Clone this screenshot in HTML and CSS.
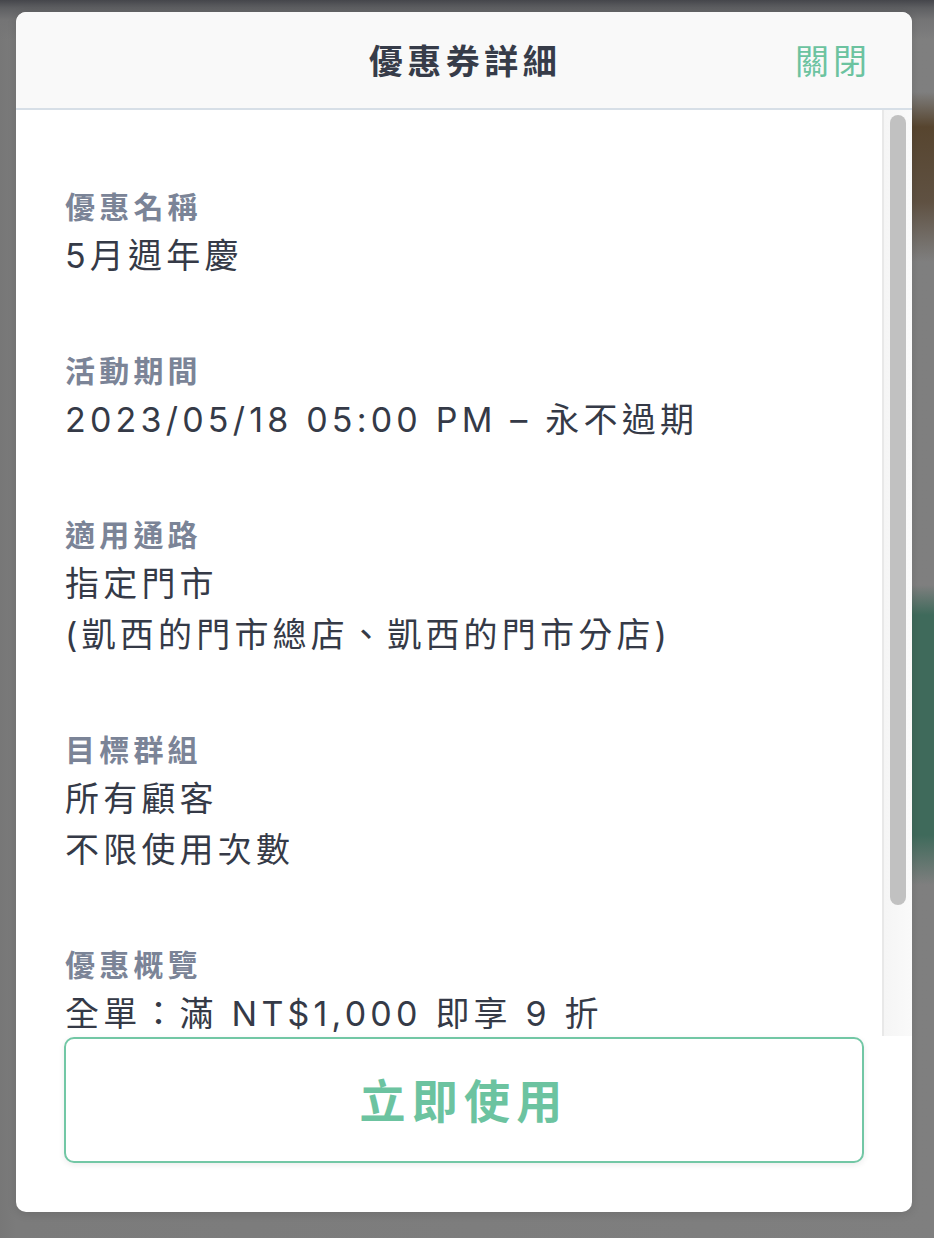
FILE: index.html
```html
<!DOCTYPE html>
<html lang="zh-Hant">
<head>
<meta charset="utf-8">
<title>優惠券詳細</title>
<link rel="stylesheet" href="styles.css">
</head>
<body>
  <div class="modal">
    <header class="modal-header">
      <span class="spacer"></span>
      <h1 class="modal-title">優惠券詳細</h1>
      <a class="close-link">關閉</a>
    </header>
    <div class="modal-scroll">
      <main class="modal-body">
        <section class="field">
          <div class="field-label">優惠名稱</div>
          <div class="field-value">5月週年慶</div>
        </section>
        <section class="field">
          <div class="field-label">活動期間</div>
          <div class="field-value">2023/05/18 05:00 PM – 永不過期</div>
        </section>
        <section class="field">
          <div class="field-label">適用通路</div>
          <div class="field-value">指定門市</div>
          <div class="field-value">(凱西的門市總店、凱西的門市分店)</div>
        </section>
        <section class="field">
          <div class="field-label">目標群組</div>
          <div class="field-value">所有顧客</div>
          <div class="field-value">不限使用次數</div>
        </section>
        <section class="field">
          <div class="field-label">優惠概覽</div>
          <div class="field-value">全單：滿 NT$1,000 即享 9 折</div>
        </section>
      </main>
      <div class="scrollbar"><div class="scrollbar-thumb"></div></div>
    </div>
    <footer class="modal-footer">
      <button class="use-button">立即使用</button>
    </footer>
  </div>
</body>
</html>
```
FILE: styles.css
```css
* { box-sizing: border-box; }

html, body {
  margin: 0;
  height: 1238px;
}

body {
  padding: 12px 22px 26px 16px;
  font-family: "Noto Sans CJK TC", "Noto Sans", sans-serif;
  background-color: #7c7c7c;
  background-image:
    linear-gradient(to bottom, rgba(92,74,56,0) 0, #57452f 35px, #5f5142 110px, rgba(95,81,66,0) 170px),
    linear-gradient(to bottom, rgba(62,106,91,0) 0, #3f6a5b 30px, #3f6a5b 250px, rgba(62,106,91,0) 300px),
    linear-gradient(to bottom, #45464b 0, #5e5f62 8px, #747475 20px, rgba(124,124,124,0) 40px),
    linear-gradient(to right, #777777 0, #7b7b7b 16px, #7f7f7f 100%);
  background-size: 22px 180px, 22px 300px, 100% 60px, 100% 100%;
  background-position: right 0 top 92px, right 0 top 585px, 0 0, 0 0;
  background-repeat: no-repeat;
}

.modal {
  height: 1200px;
  width: 896px;
  background: #ffffff;
  border-radius: 10px;
  overflow: hidden;
  display: flex;
  flex-direction: column;
  box-shadow: 0 2px 10px rgba(0,0,0,0.12);
}

.modal-header {
  height: 98px;
  flex: none;
  background: #f9f9f9;
  border-bottom: 2px solid #d7dfe7;
  display: grid;
  grid-template-columns: 1fr auto 1fr;
  align-items: center;
  padding: 0 41px 2px 43px;
}

.modal-title {
  margin: 0;
  font-size: 34px;
  font-weight: 700;
  letter-spacing: 4.5px;
  color: #373c49;
  line-height: 1.5;
}

.close-link {
  justify-self: end;
  font-size: 34px;
  letter-spacing: 4px;
  color: #6cc3a0;
  line-height: 1.5;
  cursor: pointer;
}

.modal-scroll {
  flex: 1;
  min-height: 0;
  display: flex;
}

.modal-body {
  flex: 1;
  overflow: hidden;
  padding: 73px 20px 0 49px;
  display: flex;
  flex-direction: column;
  gap: 68px;
}

.scrollbar {
  flex: none;
  width: 30px;
  border-left: 2px solid #e8e8e8;
  background: linear-gradient(to right, #f5f5f5, #fafafa);
  padding: 5px 6px 0 6px;
}

.scrollbar-thumb {
  height: 790px;
  width: 16px;
  border-radius: 8px;
  background: #c1c1c1;
}

.field {
  display: flex;
  flex-direction: column;
}

.field-label {
  font-size: 30px;
  line-height: 45px;
  font-weight: 600;
  letter-spacing: 4.2px;
  color: #7b8497;
}

.field-value {
  font-family: "Inter", "Noto Sans CJK TC", sans-serif;
  font-size: 34px;
  line-height: 46px;
  padding-top: 5px;
  letter-spacing: 4.2px;
  color: #353a47;
  white-space: nowrap;
}

.modal-footer {
  flex: none;
  padding: 1px 48px 49px 48px;
}

.use-button {
  width: 100%;
  height: 126px;
  background: #ffffff;
  border: 2px solid #72c7a5;
  border-radius: 10px;
  box-shadow: 0 2px 6px rgba(0,0,0,0.08);
  font-family: "Noto Sans CJK TC", "Noto Sans", sans-serif;
  font-size: 46px;
  font-weight: 700;
  letter-spacing: 6.3px;
  color: #6cc3a0;
  padding: 0 0 5px 0;
  cursor: pointer;
}
```
